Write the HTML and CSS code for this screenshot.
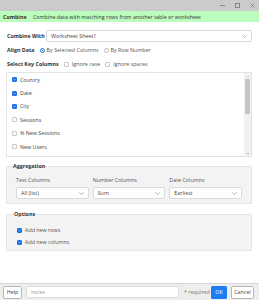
FILE: index.html
```html
<!DOCTYPE html>
<html>
<head>
<meta charset="utf-8">
<link rel="stylesheet" href="styles.css">
</head>
<body>
<div class="window">
  <div class="titlebar">
    <span class="ctl min"></span>
    <span class="ctl max"></span>
    <svg class="ctl close" width="5" height="5" viewBox="0 0 5 5"><path d="M0.5 0.5L4.5 4.5M4.5 0.5L0.5 4.5" stroke="#777" stroke-width="0.7"/></svg>
  </div>
  <div class="banner"><b>Combine</b><span>Combine data with matching rows from another table or worksheet</span></div>
  <div class="content">
    <div class="row">
      <label class="lbl combine-lbl">Combine With</label>
      <div class="select wide"><span>Worksheet Sheet1</span><svg class="chev" width="5" height="3" viewBox="0 0 5 3"><path d="M0.3 0.3L2.5 2.5L4.7 0.3" fill="none" stroke="#888" stroke-width="0.6"/></svg></div>
    </div>
    <div class="row">
      <label class="lbl">Align Data</label>
      <span class="radio on"></span><span class="opt">By Selected Columns</span>
      <span class="radio"></span><span class="opt">By Row Number</span>
    </div>
    <div class="row">
      <label class="lbl">Select Key Columns</label>
      <span class="check"></span><span class="opt">Ignore case</span>
      <span class="check"></span><span class="opt">Ignore spaces</span>
    </div>
    <div class="listbox">
      <ul class="items">
        <li><span class="check on"><svg width="5" height="5" viewBox="0 0 5 5"><path d="M1 2.6L2.1 3.6L4 1.3" fill="none" stroke="#fff" stroke-width="0.8"/></svg></span>Country</li>
        <li><span class="check on"><svg width="5" height="5" viewBox="0 0 5 5"><path d="M1 2.6L2.1 3.6L4 1.3" fill="none" stroke="#fff" stroke-width="0.8"/></svg></span>Date</li>
        <li><span class="check on"><svg width="5" height="5" viewBox="0 0 5 5"><path d="M1 2.6L2.1 3.6L4 1.3" fill="none" stroke="#fff" stroke-width="0.8"/></svg></span>City</li>
        <li><span class="check"></span>Sessions</li>
        <li><span class="check"></span>% New Sessions</li>
        <li><span class="check"></span>New Users</li>
      </ul>
      <div class="scrollbar">
        <span class="arrow up"></span>
        <span class="thumb"></span>
        <span class="arrow down"></span>
      </div>
    </div>
    <fieldset class="group agg">
      <legend>Aggregation</legend>
      <div class="cols">
        <div class="col">
          <div class="col-lbl">Text Columns</div>
          <div class="select"><span>All (list)</span><svg class="chev" width="5" height="3" viewBox="0 0 5 3"><path d="M0.3 0.3L2.5 2.5L4.7 0.3" fill="none" stroke="#888" stroke-width="0.6"/></svg></div>
        </div>
        <div class="col">
          <div class="col-lbl">Number Columns</div>
          <div class="select"><span>Sum</span><svg class="chev" width="5" height="3" viewBox="0 0 5 3"><path d="M0.3 0.3L2.5 2.5L4.7 0.3" fill="none" stroke="#888" stroke-width="0.6"/></svg></div>
        </div>
        <div class="col">
          <div class="col-lbl">Date Columns</div>
          <div class="select"><span>Earliest</span><svg class="chev" width="5" height="3" viewBox="0 0 5 3"><path d="M0.3 0.3L2.5 2.5L4.7 0.3" fill="none" stroke="#888" stroke-width="0.6"/></svg></div>
        </div>
      </div>
    </fieldset>
    <fieldset class="group opts">
      <legend>Options</legend>
      <div class="optrow"><span class="check on"><svg width="5" height="5" viewBox="0 0 5 5"><path d="M1 2.6L2.1 3.6L4 1.3" fill="none" stroke="#fff" stroke-width="0.8"/></svg></span>Add new rows</div>
      <div class="optrow"><span class="check on"><svg width="5" height="5" viewBox="0 0 5 5"><path d="M1 2.6L2.1 3.6L4 1.3" fill="none" stroke="#fff" stroke-width="0.8"/></svg></span>Add new columns</div>
    </fieldset>
  </div>
  <div class="footer">
    <button class="btn help">Help</button>
    <div class="notes">notes</div>
    <span class="req">* required</span>
    <button class="btn ok">OK</button>
    <button class="btn cancel">Cancel</button>
  </div>
</div>
</body>
</html>
```
FILE: styles.css
```css
* { box-sizing: border-box; }
html, body { margin: 0; padding: 0; background: #fff; }
body {
  font-family: "Open Sans", "Noto Sans", sans-serif;
  font-size: 5.35px;
  color: #333;
}
.window {
  width: 259px;
  height: 300px;
  display: flex;
  flex-direction: column;
}
.titlebar {
  height: 11px;
  background: #cbcbcb;
  display: flex;
  justify-content: flex-end;
  align-items: center;
  gap: 10px;
  padding-right: 4px;
}
.ctl { display: block; }
.min { width: 5px; height: 0; border-top: 0.7px solid #888; }
.max { width: 5px; height: 5px; border: 0.7px solid #888; }
.banner {
  height: 11px;
  background: #bcfcbc;
  display: flex;
  align-items: center;
  padding-left: 3px;
  color: #333;
  white-space: nowrap;
}
.banner b { font-weight: 700; width: 30px; flex: none; }
.content {
  flex: 1;
  padding: 8px 7px 0 6px;
  display: flex;
  flex-direction: column;
}
.row {
  height: 12px;
  display: flex;
  align-items: center;
  white-space: nowrap;
}
.row + .row { margin-top: 2px; }
.lbl {
  font-weight: 700;
  padding-left: 1px;
  margin-right: 5px;
  color: #333;
}
.combine-lbl { width: 40px; margin-right: 0; flex: none; }
.select {
  height: 12px;
  border: 0.7px solid #dadada;
  border-radius: 2px;
  background: #fff;
  display: flex;
  align-items: center;
  justify-content: space-between;
  padding: 0 4px 0 4px;
  color: #444;
}
.wide { flex: 1; }
.chev { display: block; }
.radio {
  width: 5px; height: 5px;
  border-radius: 50%;
  border: 0.7px solid #bbb;
  background: #fff;
  margin-right: 2px;
  flex: none;
}
.radio.on {
  border: 1.3px solid #1a73e8;
  background: radial-gradient(circle, #1a73e8 0 40%, #fff 45%);
}
.opt { margin-right: 5px; color: #555; }
.check {
  width: 5px; height: 5px;
  border: 0.7px solid #c8c8c8;
  border-radius: 1px;
  background: #fff;
  margin-right: 3px;
  flex: none;
  display: inline-flex;
  align-items: center;
  justify-content: center;
}
.check.on { background: #1a73e8; border-color: #1a73e8; }
.check svg { display: block; width: 5px; height: 5px; }
.listbox {
  margin-top: 2px;
  height: 85px;
  border: 0.7px solid #e4e4e4;
  display: flex;
}
.items {
  list-style: none;
  margin: 0;
  padding: 0 0 0 5px;
  flex: 1;
}
.items li {
  height: 13.4px;
  display: flex;
  align-items: center;
  color: #444;
}
.scrollbar {
  width: 7px;
  background: #f1f1f1;
  display: flex;
  flex-direction: column;
  align-items: center;
  padding: 3px 0 2px;
}
.arrow {
  width: 0; height: 0;
  border-left: 1.2px solid transparent;
  border-right: 1.2px solid transparent;
}
.arrow.up { border-bottom: 1.4px solid #a0a0a0; }
.arrow.down { border-top: 1.4px solid #606060; margin-top: auto; }
.thumb {
  width: 5px;
  height: 35px;
  background: #c4c4c4;
  margin-top: 2px;
}
.group {
  margin: 0;
  padding: 0 9px;
  border: 0.7px solid #e6e6e6;
  background: #f3f3f3;
  min-width: 0;
}
.group legend {
  font-weight: 700;
  padding: 0;
  margin-left: -3px;
  color: #333;
}
.agg { margin-top: 5px; height: 42px; }
.cols { display: flex; gap: 4px; }
.col { flex: 1; min-width: 0; }
.col-lbl { height: 9px; display: flex; align-items: center; color: #555; margin-top: 5px; margin-bottom: 3px; white-space: nowrap; }
.opts { margin-top: 6px; height: 41px; padding-left: 10px; }
.optrow { height: 12px; display: flex; align-items: center; color: #555; }
.optrow:first-of-type { margin-top: 6px; }
.footer {
  height: 17px;
  background: #eeeeee;
  border-top: 0.7px solid #d6d6d6;
  display: flex;
  align-items: center;
  padding: 0 5px 0 3px;
  white-space: nowrap;
}
.footer > * { flex: none; }
.btn {
  font-family: inherit;
  font-size: 5.35px;
  height: 13px;
  border-radius: 1.5px;
  padding: 0;
  margin: 0;
}
.help { width: 19px; background: #fff; border: 0.8px solid #b5b5b5; color: #444; }
.notes {
  width: 153px;
  height: 12px;
  margin-left: 4px;
  background: #fff;
  border: 0.7px solid #ddd;
  display: flex;
  align-items: center;
  padding-left: 4px;
  color: #999;
}
.req { margin-left: 5px; color: #777; }
.ok { margin-left: auto; width: 16px; background: #1e7cf2; border: none; color: #fff; }
.cancel { margin-left: 4px; width: 23px; background: #fff; border: 0.8px solid #b5b5b5; color: #444; }
```
